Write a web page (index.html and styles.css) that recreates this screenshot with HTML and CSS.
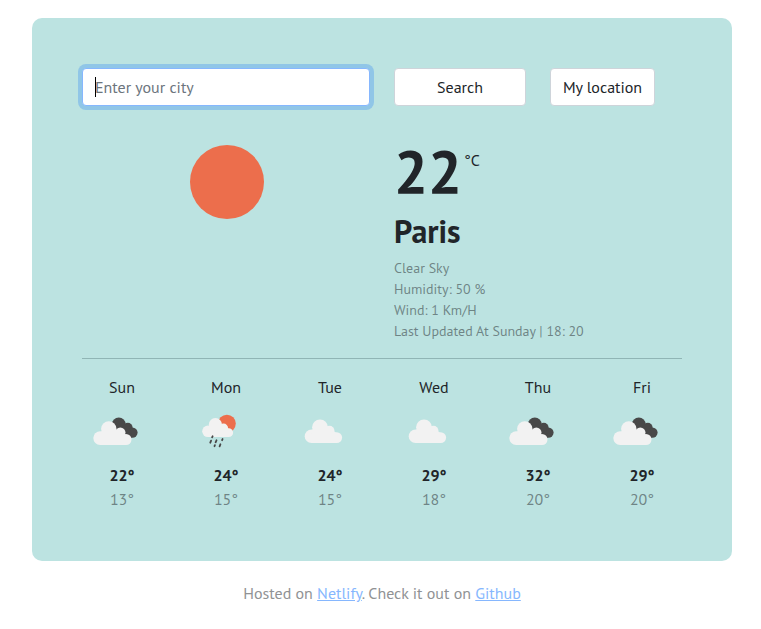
FILE: index.html
```html
<!DOCTYPE html>
<html lang="en">
<head>
<meta charset="utf-8">
<title>Weather</title>
<link rel="stylesheet" href="styles.css">
</head>
<body>
<svg class="defs" aria-hidden="true">
  <symbol id="cloud" viewBox="0 0 50 50">
    <g fill="#f2f2f2"><circle cx="13.5" cy="29.2" r="6.8"/><circle cx="22" cy="20.3" r="7.9"/><circle cx="31.5" cy="23.6" r="4.9"/><circle cx="38.7" cy="30.6" r="5.4"/><path d="M14 22.5h20l5 4V36H13.5z"/></g>
  </symbol>
  <symbol id="clouds" viewBox="0 0 50 50">
    <g fill="#484848"><circle cx="28.8" cy="17.3" r="6.9"/><circle cx="37.8" cy="20.6" r="4.8"/><circle cx="42.4" cy="25.6" r="5.2"/><path d="M29 17h10l3 13.8H34z"/></g>
    <g fill="#f2f2f2"><circle cx="10.2" cy="31.1" r="6.9"/><circle cx="18.8" cy="21.9" r="7.7"/><circle cx="30.3" cy="25.6" r="5.2"/><circle cx="36" cy="32.5" r="5.5"/><path d="M11.3 24.3h20l5 4V38H10.2z"/></g>
  </symbol>
  <symbol id="rain" viewBox="0 0 50 50">
    <circle cx="32.9" cy="16.6" r="8.9" fill="#ec6e4c"/>
    <g fill="#f2f2f2"><circle cx="14" cy="24.3" r="5.8"/><circle cx="21.4" cy="17.6" r="6.6"/><circle cx="29.5" cy="21.2" r="4.6"/><circle cx="34.7" cy="25.7" r="4.4"/><path d="M15 18.7h15l5 3.5v7.9H14z"/></g>
    <path d="M18.6 29.3l-.5 1M17.1 33.7l-.8 2M22.5 33.3l-.9 2M20.9 38.2l-.4 1M28.6 32l-.5 1.2M26.4 37.3l-.8 2" stroke="#484848" stroke-width="1.8" stroke-linecap="round"/>
  </symbol>
</svg>
<main class="card">
  <form class="search">
    <div class="field"><input type="text" placeholder="Enter your city"><span class="caret"></span></div>
    <button class="btn" type="button">Search</button>
    <button class="btn" type="button">My location</button>
  </form>
  <section class="current">
    <svg class="sun" viewBox="0 0 76 76"><circle cx="38" cy="38" r="37" fill="#ec6e4c"/></svg>
    <div>
      <div class="temp"><strong>22</strong><span class="unit">°C</span></div>
      <h1>Paris</h1>
      <ul class="details">
        <li>Clear Sky</li>
        <li>Humidity: 50 %</li>
        <li>Wind: 1 Km/H</li>
        <li>Last Updated At Sunday | 18: 20</li>
      </ul>
    </div>
  </section>
  <hr>
  <section class="forecast">
    <div class="day"><span>Sun</span><svg><use href="#clouds"/></svg><strong>22°</strong><span class="low">13°</span></div>
    <div class="day"><span>Mon</span><svg><use href="#rain"/></svg><strong>24°</strong><span class="low">15°</span></div>
    <div class="day"><span>Tue</span><svg><use href="#cloud"/></svg><strong>24°</strong><span class="low">15°</span></div>
    <div class="day"><span>Wed</span><svg><use href="#cloud"/></svg><strong>29°</strong><span class="low">18°</span></div>
    <div class="day"><span>Thu</span><svg><use href="#clouds"/></svg><strong>32°</strong><span class="low">20°</span></div>
    <div class="day"><span>Fri</span><svg><use href="#clouds"/></svg><strong>29°</strong><span class="low">20°</span></div>
  </section>
</main>
<footer>Hosted on <a href="#">Netlify</a>. Check it out on <a href="#">Github</a></footer>
</body>
</html>
```
FILE: styles.css
```css
* { box-sizing: border-box; }
body {
  margin: 0;
  padding: 18px 29px 0 32px;
  background: #fff;
  color: #212529;
  font: 16px/24px "PT Sans", "Noto Sans", sans-serif;
  overflow: hidden;
}
.defs { position: absolute; width: 0; height: 0; }
.card {
  width: 700px;
  height: 543px;
  padding: 50px;
  border-radius: 10px;
  background: #bce3e1;
}
.search {
  display: grid;
  grid-template-columns: 288px 132px 105px;
  gap: 24px;
}
.field { position: relative; height: 38px; }
.field input {
  width: 100%;
  height: 38px;
  padding: 6px 12px;
  border: 1px solid #86b7fe;
  border-radius: 4px;
  background: #fff;
  font: inherit;
  outline: 0;
  box-shadow: 0 0 0 4px rgba(13, 110, 253, .25);
}
.field input::placeholder { color: #6c757d; opacity: 1; }
.caret { position: absolute; left: 13px; top: 9px; width: 1px; height: 20px; background: #000; }
.btn {
  height: 38px;
  padding: 0;
  border: 1px solid #ced4da;
  border-radius: 4px;
  background: #fff;
  color: #212529;
  font: inherit;
  white-space: nowrap;
}
.current {
  display: grid;
  grid-template-columns: 288px 1fr;
  gap: 24px;
  height: 252px;
}
.sun { width: 76px; height: 76px; margin: 38px 0 0 107px; }
.temp { display: flex; height: 73px; margin-top: 29px; }
.temp strong { font-size: 60px; line-height: 73px; }
.unit { margin: 13px 0 0 2px; }
h1 { margin: 4px 0 8px; font-size: 32px; line-height: 38px; }
.details { margin: 0; padding: 0; list-style: none; color: rgba(33, 37, 41, .5); font-size: 14px; line-height: 21px; }
hr { margin: 0; border: 0; border-top: 1px solid #90b5b5; }
.forecast {
  display: grid;
  grid-template-columns: repeat(6, 104px);
  margin: 16px -12px 0;
}
.day { display: flex; flex-direction: column; align-items: center; }
.day svg { width: 50px; height: 50px; margin: 8px 14px 6px 0; }
.low { color: rgba(33, 37, 41, .5); }
footer { width: 700px; padding-top: 20px; text-align: center; color: #909294; }
a { color: #86b7fe; text-decoration: underline; }
```
